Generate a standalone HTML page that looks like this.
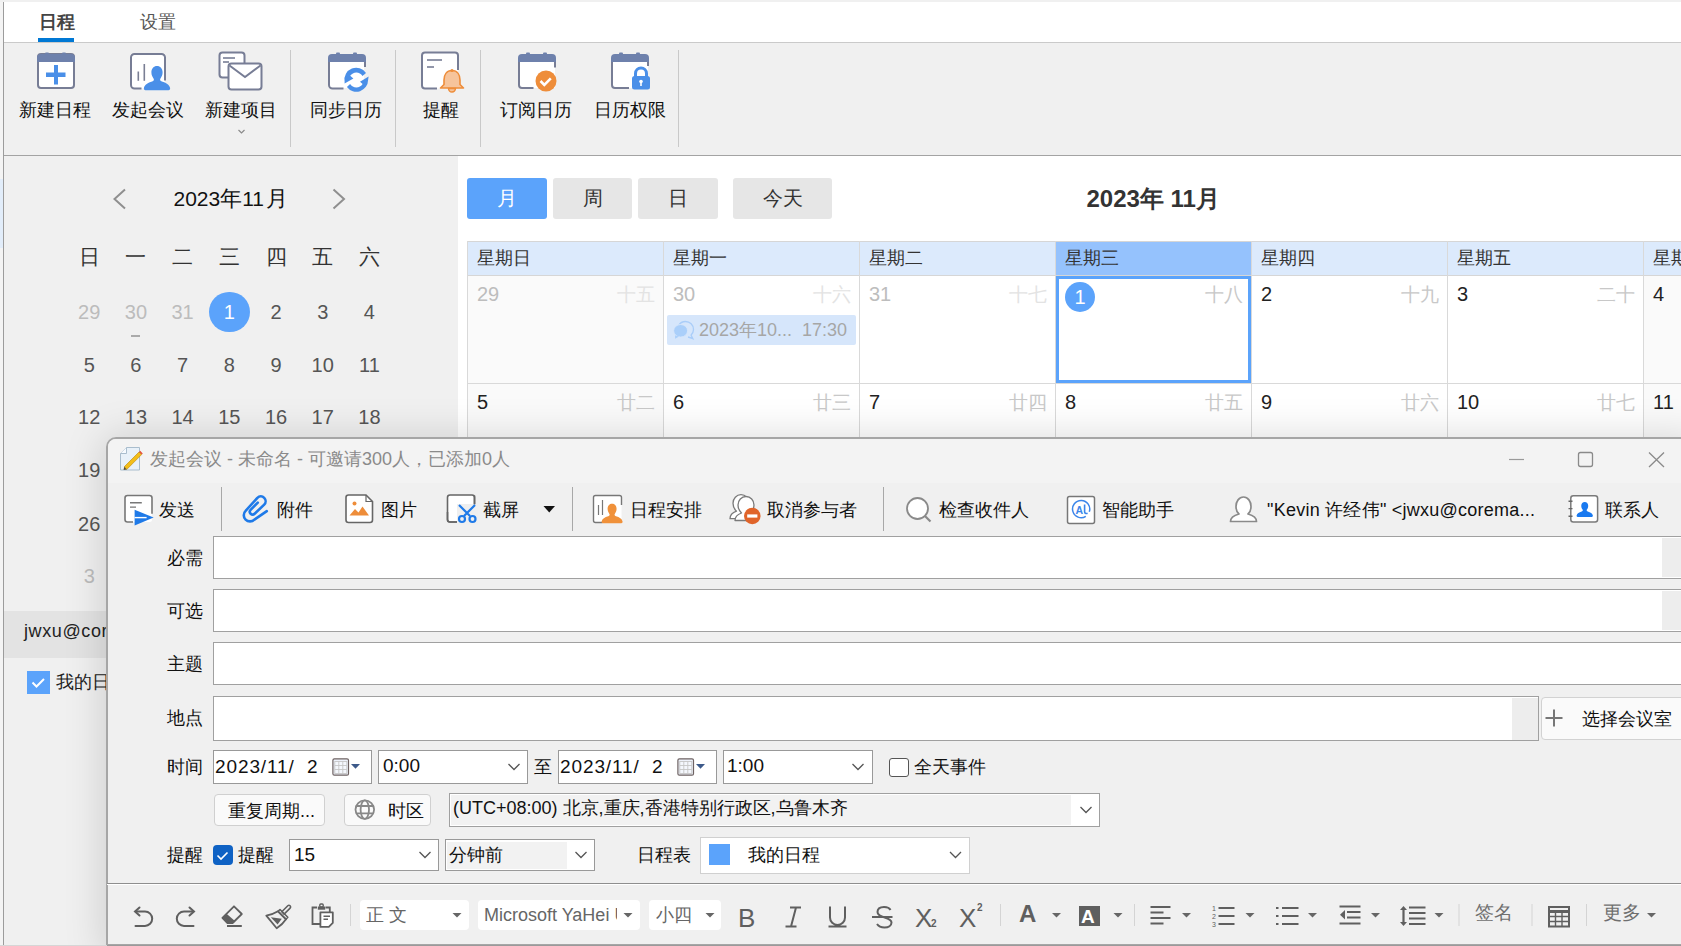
<!DOCTYPE html>
<html><head><meta charset="utf-8">
<style>
*{box-sizing:border-box}
html,body{margin:0;padding:0}
body{width:1681px;height:946px;position:relative;overflow:hidden;background:#f0f0f0;font-family:"Liberation Sans",sans-serif;color:#222}
.a{position:absolute}
.t{position:absolute;white-space:nowrap;line-height:1}
svg{position:absolute;overflow:visible}
</style></head><body>
<!-- window chrome -->
<div class="a" style="left:0;top:0;width:1681px;height:2px;background:#f0f0f0"></div>
<div class="a" style="left:0;top:2px;width:3px;height:944px;background:#f4f4f4"></div>
<div class="a" style="left:0;top:179px;width:3px;height:69px;background:#e2edfa"></div>
<div class="a" style="left:3px;top:2px;width:1px;height:944px;background:#9c9c9c"></div>
<!-- tab bar -->
<div class="a" style="left:4px;top:2px;width:1677px;height:40px;background:#fff"></div>
<div class="t" style="left:39px;top:13px;font-size:18px;font-weight:bold;color:#444">日程</div>
<div class="a" style="left:38px;top:38px;width:36px;height:4px;background:#0078d4"></div>
<div class="t" style="left:140px;top:13px;font-size:18px;color:#555">设置</div>
<div class="a" style="left:4px;top:42px;width:1677px;height:1px;background:#cacaca"></div>
<!-- ribbon -->
<div class="a" style="left:4px;top:43px;width:1677px;height:112px;background:#f0f0f0"></div>
<div class="a" style="left:4px;top:155px;width:1677px;height:1px;background:#a3a3a3"></div>
<svg style="left:0;top:0" width="700" height="156" viewBox="0 0 700 156">
<g stroke="#777d95" stroke-width="2" fill="#fff">
 <!-- 1 new calendar -->
 <rect x="38" y="54" width="36" height="34" rx="3"/>
 <!-- 3 project -->
 <rect x="219.5" y="52.5" width="25" height="25" rx="3"/>
 <rect x="228.5" y="63.5" width="33" height="26" rx="3"/>
</g>
<g fill="#6e81ac">
 <path d="M37 62V58a4 4 0 0 1 4-4h30a4 4 0 0 1 4 4v4z"/><rect x="45" y="52.5" width="4" height="3" rx="1"/><rect x="62" y="52.5" width="4" height="3" rx="1"/>
 <path d="M328 62V58a4 4 0 0 1 4-4h30a4 4 0 0 1 4 4v4z"/><rect x="336" y="52.5" width="4" height="3" rx="1"/><rect x="353" y="52.5" width="4" height="3" rx="1"/>
 <path d="M518 62V58a4 4 0 0 1 4-4h30a4 4 0 0 1 4 4v4z"/><rect x="526" y="52.5" width="4" height="3" rx="1"/><rect x="543" y="52.5" width="4" height="3" rx="1"/>
 <path d="M611 62V58a4 4 0 0 1 4-4h30a4 4 0 0 1 4 4v4z"/><rect x="619" y="52.5" width="4" height="3" rx="1"/><rect x="636" y="52.5" width="4" height="3" rx="1"/>
</g>
<!-- plus -->
<g fill="#4a8fe8"><rect x="46" y="72.5" width="19.5" height="4.5"/><rect x="54" y="65" width="4" height="19.5"/></g>
<!-- meeting bars + person -->
<rect x="131" y="54" width="34" height="34.5" rx="3" fill="#fff"/>
<g stroke="#7a7f94" stroke-width="1.6"><line x1="138.3" y1="71.5" x2="138.3" y2="80.8"/><line x1="144.3" y1="64" x2="144.3" y2="80.8"/></g>
<path d="M165 80.5V57.5a3.5 3.5 0 0 0 -3.5 -3.5h-27a3.5 3.5 0 0 0 -3.5 3.5v27.5a3.5 3.5 0 0 0 3.5 3.5h7" stroke="#777d95" stroke-width="2" fill="none"/>
<path d="M146.5 90.3h22c1.2 0 1.8-1 1.6-2.2-.8-3.5-4-5.2-8.2-6.5-1.6-.7-2-1.6-1.7-2.6 1.5-2.2 2.4-4 2.4-6.7 0-3.6-2.4-6.2-5.6-6.2s-5.6 2.6-5.6 6.2c0 2.7 .9 4.5 2.4 6.7 .3 1-.1 1.9-1.7 2.6-4.2 1.3-7.4 3-8.2 6.5-.2 1.2 .4 2.2 1.6 2.2z" fill="#4a8fe8" stroke="#efefef" stroke-width="0"/>
<!-- project doc lines + envelope V -->
<g stroke="#777d95" stroke-width="1.6" fill="none"><line x1="223" y1="58" x2="235" y2="58"/><line x1="223" y1="62" x2="229" y2="62"/><path d="M229.5 65.5L245 77 260.5 65.5" stroke-width="2"/></g>
<path d="M238.5 130l3 3 3-3" stroke="#8a8a8a" stroke-width="1.2" fill="none"/>
<!-- sync -->
<path d="M330 62h34v26h-34z" fill="#fff"/>
<path d="M329 62v23a3.5 3.5 0 0 0 3.5 3.5h11M365 62v5" stroke="#777d95" stroke-width="2" fill="none"/>
<g fill="#4a8fe8"><path d="M366 72.9A11.8 11.8 0 0 0 344.6 81.5L344.6 83.6 353.4 78.5 350.2 75.8A7.4 7.4 0 0 1 362.5 76Z"/><path d="M346.9 87.1A11.8 11.8 0 0 0 368.1 80L368.6 76.6 360 81.8 362.6 83.9A7.4 7.4 0 0 1 350.1 84Z"/></g>
<!-- reminder -->
<rect x="422" y="52.5" width="36" height="36" rx="3" fill="#fff"/>
<path d="M458 70V55.5a3 3 0 0 0-3-3h-30a3 3 0 0 0-3 3v30a3 3 0 0 0 3 3h12" stroke="#777d95" stroke-width="2" fill="none"/>
<g stroke="#777d95" stroke-width="1.6"><line x1="427" y1="60" x2="442" y2="60"/><line x1="427" y1="67" x2="434" y2="67"/></g>
<path d="M452 70.5c-5.5 0-8 4.5-8 9.5v4.5l-3.5 3.5h23l-3.5-3.5v-4.5c0-5-2.5-9.5-8-9.5z" fill="#f6c49b" stroke="#ee8d3a" stroke-width="1.6" stroke-linejoin="round"/>
<path d="M448.5 88.5a3.5 3.5 0 0 0 7 0z" fill="#f6c49b" stroke="#ee8d3a" stroke-width="1.4"/>
<circle cx="452" cy="70.5" r="1.5" fill="#ee8d3a"/>
<!-- subscribe check -->
<rect x="519" y="62" width="36" height="26" fill="#fff"/>
<path d="M519 62v23a3 3 0 0 0 3 3h11.5M555 62v5.5" stroke="#777d95" stroke-width="2" fill="none"/>
<circle cx="546" cy="81" r="10.5" fill="#ee8d3a"/>
<path d="M540.5 81l3.8 3.8 6.5-6.5" stroke="#fff" stroke-width="2.6" fill="none"/>
<!-- permission lock -->
<rect x="612" y="62" width="36" height="26" fill="#fff"/>
<path d="M612 62v23a3 3 0 0 0 3 3h14M648 62v4" stroke="#777d95" stroke-width="2" fill="none"/>
<path d="M635.5 77v-3.5a5.5 5.5 0 0 1 11 0v3.5" stroke="#4a8fe8" stroke-width="3" fill="none"/>
<rect x="632" y="76" width="18" height="13.5" rx="2.5" fill="#4a8fe8"/>
<circle cx="641" cy="81.5" r="1.8" fill="#fff"/><rect x="640.2" y="82" width="1.6" height="4" fill="#fff"/>
<!-- separators -->
<g fill="#c9c9c9"><rect x="290" y="50" width="1" height="97"/><rect x="395" y="50" width="1" height="97"/><rect x="480" y="50" width="1" height="97"/><rect x="678" y="50" width="1" height="97"/></g>
</svg>
<div class="t" style="left:19px;top:101px;font-size:18px;color:#111">新建日程</div>
<div class="t" style="left:112px;top:101px;font-size:18px;color:#111">发起会议</div>
<div class="t" style="left:205px;top:101px;font-size:18px;color:#111">新建项目</div>
<div class="t" style="left:310px;top:101px;font-size:18px;color:#111">同步日历</div>
<div class="t" style="left:423px;top:101px;font-size:18px;color:#111">提醒</div>
<div class="t" style="left:500px;top:101px;font-size:18px;color:#111">订阅日历</div>
<div class="t" style="left:594px;top:101px;font-size:18px;color:#111">日历权限</div>
<!-- sidebar -->
<div class="a" style="left:4px;top:156px;width:454px;height:790px;background:#f0f0f0"></div>
<div class="t" style="left:173.5px;top:188px;font-size:21px;color:#111">2023<span style="font-size:21.5px">年</span>11<span style="font-size:21.5px;margin-left:2px">月</span></div>
<svg style="left:0;top:0" width="460" height="700"><path d="M125 189.5L114.5 199 125 208.5" stroke="#8f8f8f" stroke-width="2" fill="none"/><path d="M333.5 189.5L344 199 333.5 208.5" stroke="#8f8f8f" stroke-width="2" fill="none"/></svg>
<div class="t" style="left:69.2px;width:40px;text-align:center;top:246px;font-size:21px;color:#333">日</div>
<div class="t" style="left:115.9px;width:40px;text-align:center;top:246px;font-size:21px;color:#333">一</div>
<div class="t" style="left:162.6px;width:40px;text-align:center;top:246px;font-size:21px;color:#333">二</div>
<div class="t" style="left:209.3px;width:40px;text-align:center;top:246px;font-size:21px;color:#333">三</div>
<div class="t" style="left:256.0px;width:40px;text-align:center;top:246px;font-size:21px;color:#333">四</div>
<div class="t" style="left:302.7px;width:40px;text-align:center;top:246px;font-size:21px;color:#333">五</div>
<div class="t" style="left:349.4px;width:40px;text-align:center;top:246px;font-size:21px;color:#333">六</div>
<div class="a" style="left:209.3px;top:291.8px;width:40.4px;height:40.4px;border-radius:50%;background:#5ba3fb"></div>
<div class="t" style="left:69.2px;width:40px;text-align:center;top:301.8px;font-size:20px;color:#bcbcbc">29</div>
<div class="t" style="left:115.9px;width:40px;text-align:center;top:301.8px;font-size:20px;color:#bcbcbc">30</div>
<div class="t" style="left:162.6px;width:40px;text-align:center;top:301.8px;font-size:20px;color:#bcbcbc">31</div>
<div class="t" style="left:209.3px;width:40px;text-align:center;top:301.8px;font-size:20px;color:#fff">1</div>
<div class="t" style="left:256.0px;width:40px;text-align:center;top:301.8px;font-size:20px;color:#555">2</div>
<div class="t" style="left:302.7px;width:40px;text-align:center;top:301.8px;font-size:20px;color:#555">3</div>
<div class="t" style="left:349.4px;width:40px;text-align:center;top:301.8px;font-size:20px;color:#555">4</div>
<div class="t" style="left:69.2px;width:40px;text-align:center;top:355.3px;font-size:20px;color:#555">5</div>
<div class="t" style="left:115.9px;width:40px;text-align:center;top:355.3px;font-size:20px;color:#555">6</div>
<div class="t" style="left:162.6px;width:40px;text-align:center;top:355.3px;font-size:20px;color:#555">7</div>
<div class="t" style="left:209.3px;width:40px;text-align:center;top:355.3px;font-size:20px;color:#555">8</div>
<div class="t" style="left:256.0px;width:40px;text-align:center;top:355.3px;font-size:20px;color:#555">9</div>
<div class="t" style="left:302.7px;width:40px;text-align:center;top:355.3px;font-size:20px;color:#555">10</div>
<div class="t" style="left:349.4px;width:40px;text-align:center;top:355.3px;font-size:20px;color:#555">11</div>
<div class="t" style="left:69.2px;width:40px;text-align:center;top:407.3px;font-size:20px;color:#555">12</div>
<div class="t" style="left:115.9px;width:40px;text-align:center;top:407.3px;font-size:20px;color:#555">13</div>
<div class="t" style="left:162.6px;width:40px;text-align:center;top:407.3px;font-size:20px;color:#555">14</div>
<div class="t" style="left:209.3px;width:40px;text-align:center;top:407.3px;font-size:20px;color:#555">15</div>
<div class="t" style="left:256.0px;width:40px;text-align:center;top:407.3px;font-size:20px;color:#555">16</div>
<div class="t" style="left:302.7px;width:40px;text-align:center;top:407.3px;font-size:20px;color:#555">17</div>
<div class="t" style="left:349.4px;width:40px;text-align:center;top:407.3px;font-size:20px;color:#555">18</div>
<div class="t" style="left:69.2px;width:40px;text-align:center;top:460.3px;font-size:20px;color:#555">19</div>
<div class="t" style="left:115.9px;width:40px;text-align:center;top:460.3px;font-size:20px;color:#555">20</div>
<div class="t" style="left:162.6px;width:40px;text-align:center;top:460.3px;font-size:20px;color:#555">21</div>
<div class="t" style="left:209.3px;width:40px;text-align:center;top:460.3px;font-size:20px;color:#555">22</div>
<div class="t" style="left:256.0px;width:40px;text-align:center;top:460.3px;font-size:20px;color:#555">23</div>
<div class="t" style="left:302.7px;width:40px;text-align:center;top:460.3px;font-size:20px;color:#555">24</div>
<div class="t" style="left:349.4px;width:40px;text-align:center;top:460.3px;font-size:20px;color:#555">25</div>
<div class="t" style="left:69.2px;width:40px;text-align:center;top:513.8px;font-size:20px;color:#555">26</div>
<div class="t" style="left:115.9px;width:40px;text-align:center;top:513.8px;font-size:20px;color:#555">27</div>
<div class="t" style="left:162.6px;width:40px;text-align:center;top:513.8px;font-size:20px;color:#555">28</div>
<div class="t" style="left:209.3px;width:40px;text-align:center;top:513.8px;font-size:20px;color:#555">29</div>
<div class="t" style="left:256.0px;width:40px;text-align:center;top:513.8px;font-size:20px;color:#555">30</div>
<div class="t" style="left:302.7px;width:40px;text-align:center;top:513.8px;font-size:20px;color:#bcbcbc">1</div>
<div class="t" style="left:349.4px;width:40px;text-align:center;top:513.8px;font-size:20px;color:#bcbcbc">2</div>
<div class="t" style="left:69.2px;width:40px;text-align:center;top:565.8px;font-size:20px;color:#bcbcbc">3</div>
<div class="t" style="left:115.9px;width:40px;text-align:center;top:565.8px;font-size:20px;color:#bcbcbc">4</div>
<div class="t" style="left:162.6px;width:40px;text-align:center;top:565.8px;font-size:20px;color:#bcbcbc">5</div>
<div class="t" style="left:209.3px;width:40px;text-align:center;top:565.8px;font-size:20px;color:#bcbcbc">6</div>
<div class="t" style="left:256.0px;width:40px;text-align:center;top:565.8px;font-size:20px;color:#bcbcbc">7</div>
<div class="t" style="left:302.7px;width:40px;text-align:center;top:565.8px;font-size:20px;color:#bcbcbc">8</div>
<div class="t" style="left:349.4px;width:40px;text-align:center;top:565.8px;font-size:20px;color:#bcbcbc">9</div>
<div class="a" style="left:131px;top:335px;width:9px;height:1.5px;background:#aaa"></div>
<div class="a" style="left:4px;top:611px;width:454px;height:47px;background:#e3e3e3"></div>
<div class="t" style="left:24px;top:622px;font-size:18px;color:#222;letter-spacing:0.6px">jwxu@coremail.cn</div>
<div class="a" style="left:27px;top:670.5px;width:23px;height:23px;background:#5ba3fb"></div>
<svg style="left:0;top:0" width="60" height="700"><path d="M32.5 682.5l4 4 7.5-7.5" stroke="#fff" stroke-width="2" fill="none"/></svg>
<div class="t" style="left:56px;top:673px;font-size:18px;color:#222">我的日程</div>
<!-- main calendar -->
<div class="a" style="left:458px;top:156px;width:1223px;height:790px;background:#fff"></div>
<div class="a" style="left:467px;top:178px;width:80px;height:41px;border-radius:3px;background:#5ba3fb;color:#fff;font-size:20px;line-height:41px;text-align:center">月</div>
<div class="a" style="left:553px;top:178px;width:79px;height:41px;border-radius:3px;background:#e6e6e6;color:#333;font-size:20px;line-height:41px;text-align:center">周</div>
<div class="a" style="left:638px;top:178px;width:80px;height:41px;border-radius:3px;background:#e6e6e6;color:#333;font-size:20px;line-height:41px;text-align:center">日</div>
<div class="a" style="left:733px;top:178px;width:99px;height:41px;border-radius:3px;background:#e6e6e6;color:#333;font-size:20px;line-height:41px;text-align:center">今天</div>
<div class="t" style="left:1086.5px;top:187px;font-size:24px;font-weight:bold;color:#333">2023<span style="font-size:24px">年</span> 11<span style="font-size:24px">月</span></div>
<div class="a" style="left:467px;top:241px;width:1214px;height:35px;background:#dceafc;border-top:1px solid #d6d6d6;border-bottom:1px solid #d6d6d6"></div>
<div class="a" style="left:1056px;top:242px;width:195px;height:33px;background:#95c2fd"></div>
<div class="t" style="left:477px;top:249px;font-size:18px;color:#333">星期日</div>
<div class="t" style="left:673px;top:249px;font-size:18px;color:#333">星期一</div>
<div class="t" style="left:869px;top:249px;font-size:18px;color:#333">星期二</div>
<div class="t" style="left:1065px;top:249px;font-size:18px;color:#333">星期三</div>
<div class="t" style="left:1261px;top:249px;font-size:18px;color:#333">星期四</div>
<div class="t" style="left:1457px;top:249px;font-size:18px;color:#333">星期五</div>
<div class="t" style="left:1653px;top:249px;font-size:18px;color:#333">星期六</div>
<div class="a" style="left:467px;top:276px;width:196px;height:107px;background:#fafafa"></div>
<div class="a" style="left:1643px;top:276px;width:38px;height:107px;background:#fafafa"></div>
<div class="a" style="left:467px;top:384px;width:196px;height:60px;background:#fafafa"></div>
<div class="a" style="left:1643px;top:384px;width:38px;height:60px;background:#fafafa"></div>
<div class="a" style="left:467px;top:241px;width:1px;height:205px;background:#d9d9d9"></div>
<div class="a" style="left:663px;top:241px;width:1px;height:205px;background:#d9d9d9"></div>
<div class="a" style="left:859px;top:241px;width:1px;height:205px;background:#d9d9d9"></div>
<div class="a" style="left:1055px;top:241px;width:1px;height:205px;background:#d9d9d9"></div>
<div class="a" style="left:1251px;top:241px;width:1px;height:205px;background:#d9d9d9"></div>
<div class="a" style="left:1447px;top:241px;width:1px;height:205px;background:#d9d9d9"></div>
<div class="a" style="left:1643px;top:241px;width:1px;height:205px;background:#d9d9d9"></div>
<div class="a" style="left:467px;top:383px;width:1214px;height:1px;background:#d9d9d9"></div>
<div class="t" style="left:477px;top:284px;font-size:20px;color:#bdbdbd">29</div>
<div class="t" style="left:565px;width:90px;text-align:right;top:285px;font-size:19px;color:#e3e3e3">十五</div>
<div class="t" style="left:673px;top:284px;font-size:20px;color:#bdbdbd">30</div>
<div class="t" style="left:761px;width:90px;text-align:right;top:285px;font-size:19px;color:#e3e3e3">十六</div>
<div class="t" style="left:869px;top:284px;font-size:20px;color:#bdbdbd">31</div>
<div class="t" style="left:957px;width:90px;text-align:right;top:285px;font-size:19px;color:#e3e3e3">十七</div>
<div class="t" style="left:1153px;width:90px;text-align:right;top:285px;font-size:19px;color:#c8c8c8">十八</div>
<div class="t" style="left:1261px;top:284px;font-size:20px;color:#222">2</div>
<div class="t" style="left:1349px;width:90px;text-align:right;top:285px;font-size:19px;color:#c8c8c8">十九</div>
<div class="t" style="left:1457px;top:284px;font-size:20px;color:#222">3</div>
<div class="t" style="left:1545px;width:90px;text-align:right;top:285px;font-size:19px;color:#c8c8c8">二十</div>
<div class="t" style="left:1653px;top:284px;font-size:20px;color:#222">4</div>
<div class="t" style="left:1741px;width:90px;text-align:right;top:285px;font-size:19px;color:#c8c8c8">廿一</div>
<div class="t" style="left:477px;top:392px;font-size:20px;color:#222">5</div>
<div class="t" style="left:565px;width:90px;text-align:right;top:393px;font-size:19px;color:#c8c8c8">廿二</div>
<div class="t" style="left:673px;top:392px;font-size:20px;color:#222">6</div>
<div class="t" style="left:761px;width:90px;text-align:right;top:393px;font-size:19px;color:#c8c8c8">廿三</div>
<div class="t" style="left:869px;top:392px;font-size:20px;color:#222">7</div>
<div class="t" style="left:957px;width:90px;text-align:right;top:393px;font-size:19px;color:#c8c8c8">廿四</div>
<div class="t" style="left:1065px;top:392px;font-size:20px;color:#222">8</div>
<div class="t" style="left:1153px;width:90px;text-align:right;top:393px;font-size:19px;color:#c8c8c8">廿五</div>
<div class="t" style="left:1261px;top:392px;font-size:20px;color:#222">9</div>
<div class="t" style="left:1349px;width:90px;text-align:right;top:393px;font-size:19px;color:#c8c8c8">廿六</div>
<div class="t" style="left:1457px;top:392px;font-size:20px;color:#222">10</div>
<div class="t" style="left:1545px;width:90px;text-align:right;top:393px;font-size:19px;color:#c8c8c8">廿七</div>
<div class="t" style="left:1653px;top:392px;font-size:20px;color:#222">11</div>
<div class="t" style="left:1741px;width:90px;text-align:right;top:393px;font-size:19px;color:#c8c8c8">廿八</div>
<div class="a" style="left:1056px;top:276px;width:195px;height:107px;border:3px solid #5ba3fb"></div>
<div class="a" style="left:1065px;top:282px;width:30px;height:30px;border-radius:50%;background:#5ba3fb;color:#fff;font-size:20px;line-height:30px;text-align:center">1</div>
<div class="a" style="left:667px;top:315px;width:189px;height:30px;background:#d6e6fb;border-radius:2px"></div>
<svg style="left:0;top:0" width="700" height="360"><path d="M690.8 335.5c1.6-1.5 2.7-3.6 2.7-6 0-4.5-3.6-8-8-8-3 0-5.6 1.6-7 4M688 337c1.5.3 3.2.8 4.8 1.6l-1.8-3.6" fill="none" stroke="#a9cdf9" stroke-width="1.3"/><ellipse cx="680.6" cy="330.8" rx="7" ry="6.3" fill="#aacffa" stroke="#d6e6fb" stroke-width="1"/><path d="M675 335.5l.2 3.3 3.8-2.3z" fill="#aacffa"/></svg>
<div class="t" style="left:699px;top:321px;font-size:18px;color:#a6a6a6">2023年10...&nbsp; 17:30</div>
<!-- dialog -->
<div class="a" style="left:107px;top:437px;width:1600px;height:520px;border-radius:10px 0 0 0;box-shadow:-3px 0 40px rgba(0,0,0,0.15)"></div>
<div class="a" style="left:106px;top:437px;width:1600px;height:509px;border:2px solid #a6a6a6;border-radius:10px 0 0 0;background:#f0f0f0;overflow:hidden"><div class="a" style="left:0;top:0;width:1600px;height:44px;background:#f3f3f3"></div></div>
<svg style="left:0;top:0" width="1681" height="946"><path d="M120.5 453.5l6-6h13v22.5h-19z" fill="#e8f1f9" stroke="#a9bdcd" stroke-width="1"/><path d="M120.5 453.5h6v-6" fill="#f7fbff" stroke="#a9bdcd" stroke-width="1"/><path d="M124.2 466.8l14.8-14.8 2.6 2.6-14.8 14.8z" fill="#f2be1a" stroke="#b8860b" stroke-width="0.6"/><path d="M139 452l1.2-1.2 2.6 2.6-1.2 1.2z" fill="#e5533d"/><path d="M124.2 466.8l-0.6 3.2 3.2-0.6z" fill="#5a5030"/><path d="M1509 459.5h15" stroke="#9a9a9a" stroke-width="1.2"/><rect x="1578.5" y="452.5" width="14" height="14" rx="2" fill="none" stroke="#8a8a8a" stroke-width="1.3"/><path d="M1649 452.5l15 14.5M1664 452.5l-15 14.5" stroke="#8a8a8a" stroke-width="1.3"/></svg>
<div class="t" style="left:150px;top:450px;font-size:18px;color:#8a8a8a">发起会议 - 未命名 - 可邀请300人，已添加0人</div>
<div class="t" style="left:159px;top:501px;font-size:18px;color:#111;">发送</div>
<div class="t" style="left:277px;top:501px;font-size:18px;color:#111;">附件</div>
<div class="t" style="left:381px;top:501px;font-size:18px;color:#111;">图片</div>
<div class="t" style="left:483px;top:501px;font-size:18px;color:#111;">截屏</div>
<div class="t" style="left:630px;top:501px;font-size:18px;color:#111;">日程安排</div>
<div class="t" style="left:767px;top:501px;font-size:18px;color:#111;">取消参与者</div>
<div class="t" style="left:939px;top:501px;font-size:18px;color:#111;">检查收件人</div>
<div class="t" style="left:1102px;top:501px;font-size:18px;color:#111;">智能助手</div>
<div class="t" style="left:1605px;top:501px;font-size:18px;color:#111;">联系人</div>
<div class="t" style="left:1267px;top:501px;font-size:18px;color:#111;letter-spacing:0.25px">"Kevin 许经伟" &lt;jwxu@corema...</div>
<svg style="left:0;top:0" width="1681" height="946"><rect x="221" y="487" width="1" height="44" fill="#a8a8a8"/><rect x="572" y="487" width="1" height="44" fill="#a8a8a8"/><rect x="883" y="487" width="1" height="44" fill="#a8a8a8"/><rect x="125" y="495.5" width="27" height="26.5" rx="2.5" fill="#fff"/><path d="M152 513.8V498a2.5 2.5 0 0 0-2.5-2.5h-22a2.5 2.5 0 0 0-2.5 2.5v21.5a2.5 2.5 0 0 0 2.5 2.5h5.5" fill="none" stroke="#777" stroke-width="1.6"/><path d="M130 502.7h11.8M130 507.1h6" stroke="#777" stroke-width="1.4"/><path d="M134.6 509.8L153.6 517.6 134.6 525.6z" fill="#1f7ae8"/><path d="M134.6 517.6h12" stroke="#fff" stroke-width="1.4"/><path d="M257.8 502.6L250.6 509.8A2.83 2.83 0 0 0 254.6 513.8L264.2 504.6A4.8 4.8 0 0 0 257.4 497.8L245.6 510.8A6.22 6.22 0 0 0 254.4 519.6L266.8 511.2" fill="none" stroke="#1f7ae8" stroke-width="2.6" stroke-linecap="round" stroke-linejoin="round"/><path d="M346 497.5a2.5 2.5 0 0 1 2.5-2.5h17.5l6.5 6.5v18.5a2.5 2.5 0 0 1-2.5 2.5h-21.5a2.5 2.5 0 0 1-2.5-2.5z" fill="#fff" stroke="#666" stroke-width="1.6"/><path d="M366 495v6.5h6.5" fill="none" stroke="#666" stroke-width="1.2"/><circle cx="354.5" cy="503.5" r="2" fill="#ee8d3a"/><path d="M349.5 515.5l5.5-6.5 3.5 3.5 4-6 6.5 9z" fill="#ee8d3a"/><rect x="447.5" y="495" width="27" height="27" rx="2.5" fill="#fff" stroke="#666" stroke-width="1.6"/><rect x="457" y="504" width="21" height="21" fill="#efefef"/><path d="M447.5 512v7.5a2.5 2.5 0 0 0 2.5 2.5h7" stroke="#666" stroke-width="1.6" fill="none"/><path d="M474.5 495.5v9" stroke="#666" stroke-width="1.6"/><g stroke="#1f7ae8" stroke-width="2.2" fill="none"><path d="M459 505l11 11M475 505l-11 11"/><circle cx="462" cy="519" r="3"/><circle cx="472.5" cy="519" r="3"/></g><path d="M543.5 506h11.5l-5.75 6.5z" fill="#111"/><rect x="593.5" y="495.5" width="28" height="27" rx="2" fill="#fff"/><path d="M621.5 505V497.5a2 2 0 0 0-2-2h-24a2 2 0 0 0-2 2v23a2 2 0 0 0 2 2h7" stroke="#777" stroke-width="1.4" fill="none"/><path d="M598.5 505v10M602.5 500v15" stroke="#777" stroke-width="1.2"/><path transform="translate(602.5 504) scale(0.8) translate(-145 -66.3)" d="M146.5 90.3h22c1.2 0 1.8-1 1.6-2.2-.8-3.5-4-5.2-8.2-6.5-1.6-.7-2-1.6-1.7-2.6 1.5-2.2 2.4-4 2.4-6.7 0-3.6-2.4-6.2-5.6-6.2s-5.6 2.6-5.6 6.2c0 2.7 .9 4.5 2.4 6.7 .3 1-.1 1.9-1.7 2.6-4.2 1.3-7.4 3-8.2 6.5-.2 1.2 .4 2.2 1.6 2.2z" fill="#f0913a"/><g fill="#fff" stroke="#7a7a7a" stroke-width="1.3" stroke-linejoin="round"><path transform="translate(-5 -1.8)" d="M735 520.5c0-4 2.5-6 6.5-7.5-2-2-3.5-4.5-3.5-8 0-4.5 3.5-8.5 8-8.5s8 4 8 8.5c0 3.5-1.5 6-3.5 8 4 1.5 6.5 3.5 6.5 7.5z"/><path d="M735 520.5c0-4 2.5-6 6.5-7.5-2-2-3.5-4.5-3.5-8 0-4.5 3.5-8.5 8-8.5s8 4 8 8.5c0 3.5-1.5 6-3.5 8 4 1.5 6.5 3.5 6.5 7.5z"/></g><circle cx="752.3" cy="516" r="8.3" fill="#e0642a"/><rect x="747.2" y="514.4" width="10.2" height="3.2" fill="#fff"/><circle cx="917.5" cy="508.5" r="10.5" fill="#fff" stroke="#8a8a8a" stroke-width="1.8"/><path d="M925 516l5.5 5.5" stroke="#8a8a8a" stroke-width="2.2"/><rect x="1067.5" y="496.5" width="27" height="27" rx="2" fill="#fff" stroke="#777" stroke-width="1.5"/><path d="M1085.8 516.3A8.6 8.6 0 1 1 1089.3 511.8" fill="none" stroke="#3b86ea" stroke-width="1.5"/><text x="1079.2" y="513.6" font-size="10.5" font-weight="bold" font-family="Liberation Sans" fill="#3b86ea" text-anchor="middle">A</text><path d="M1084.6 504.5v7.2c0 1.5 1.2 2.2 3 1.6" fill="none" stroke="#3b86ea" stroke-width="1.6"/><path d="M1230.5 521.5c0-3.5 3-6 8.5-7.5-2-1.5-3-4-3-7.5 0-5 3-9.5 7.5-9.5s7.5 4.5 7.5 9.5c0 3.5-1 6-3 7.5 5.5 1.5 8.5 4 8.5 7.5z" fill="#fff" stroke="#8a8a8a" stroke-width="1.7" stroke-linejoin="round"/><rect x="1570.8" y="495.8" width="26.8" height="26.2" rx="2.5" fill="#fff" stroke="#7a7a7a" stroke-width="1.5"/><path d="M1568.5 501.3h4M1568.5 508.6h4M1568.5 516.3h4" stroke="#666" stroke-width="1.4"/><path transform="translate(1577.3 502) scale(.62) translate(-145 -66.3)" d="M146.5 90.3h22c1.2 0 1.8-1 1.6-2.2-.8-3.5-4-5.2-8.2-6.5-1.6-.7-2-1.6-1.7-2.6 1.5-2.2 2.4-4 2.4-6.7 0-3.6-2.4-6.2-5.6-6.2s-5.6 2.6-5.6 6.2c0 2.7 .9 4.5 2.4 6.7 .3 1-.1 1.9-1.7 2.6-4.2 1.3-7.4 3-8.2 6.5-.2 1.2 .4 2.2 1.6 2.2z" fill="#1a7af0"/></svg>
<div class="t" style="left:167px;top:549px;font-size:18px;color:#111;">必需</div>
<div class="t" style="left:167px;top:602px;font-size:18px;color:#111;">可选</div>
<div class="t" style="left:167px;top:655px;font-size:18px;color:#111;">主题</div>
<div class="t" style="left:167px;top:709px;font-size:18px;color:#111;">地点</div>
<div class="a" style="left:213px;top:536px;width:1480px;height:43px;background:#fff;border:1px solid #a0a0a0;border-radius:0px;"></div>
<div class="a" style="left:1662px;top:538px;width:19px;height:39px;background:#ededed"></div>
<div class="a" style="left:213px;top:589px;width:1480px;height:43px;background:#fff;border:1px solid #a0a0a0;border-radius:0px;"></div>
<div class="a" style="left:1662px;top:591px;width:19px;height:39px;background:#ededed"></div>
<div class="a" style="left:213px;top:642px;width:1480px;height:43px;background:#fff;border:1px solid #a0a0a0;border-radius:0px;"></div>
<div class="a" style="left:213px;top:696px;width:1326px;height:45px;background:#fff;border:1px solid #a0a0a0;border-radius:0px;"></div>
<div class="a" style="left:1512px;top:698px;width:26px;height:42px;background:#ededed"></div>
<div class="a" style="left:1541px;top:697px;width:160px;height:43px;background:#fafafa;border:1px solid #d2d2d2;border-radius:4px;"></div>
<svg style="left:0;top:0" width="1681" height="946"><path d="M1554 709.5v17M1545.5 718h17" stroke="#777" stroke-width="2"/></svg>
<div class="t" style="left:1582px;top:710px;font-size:18px;color:#111;">选择会议室</div>
<div class="t" style="left:167px;top:758px;font-size:18px;color:#111;">时间</div>
<div class="a" style="left:213px;top:750px;width:159px;height:34px;background:#fff;border:1px solid #999;border-radius:0px;"></div>
<div class="t" style="left:215px;top:757px;font-size:19px;color:#111;letter-spacing:0.9px">2023/11/&nbsp; 2</div>
<div class="a" style="left:378px;top:750px;width:150px;height:34px;background:#fff;border:1px solid #999;border-radius:0px;"></div>
<div class="t" style="left:383px;top:756px;font-size:19px;color:#111;">0:00</div>
<div class="t" style="left:534px;top:758px;font-size:18px;color:#111;">至</div>
<div class="a" style="left:558px;top:750px;width:159px;height:34px;background:#fff;border:1px solid #999;border-radius:0px;"></div>
<div class="t" style="left:560px;top:757px;font-size:19px;color:#111;letter-spacing:0.9px">2023/11/&nbsp; 2</div>
<div class="a" style="left:723px;top:750px;width:150px;height:34px;background:#fff;border:1px solid #999;border-radius:0px;"></div>
<div class="t" style="left:727px;top:756px;font-size:19px;color:#111;">1:00</div>
<div class="a" style="left:889px;top:757.5px;width:20px;height:19.5px;background:#fff;border:1px solid #555;border-radius:3px;"></div>
<div class="t" style="left:914px;top:758px;font-size:18px;color:#111;">全天事件</div>
<div class="a" style="left:214px;top:794px;width:111px;height:32px;background:#fafafa;border:1px solid #d0d0d0;border-radius:4px;"></div>
<div class="t" style="left:228px;top:802px;font-size:18px;color:#111;">重复周期...</div>
<div class="a" style="left:344px;top:794px;width:87px;height:32px;background:#fafafa;border:1px solid #d0d0d0;border-radius:4px;"></div>
<div class="t" style="left:388px;top:802px;font-size:18px;color:#111;">时区</div>
<div class="a" style="left:449px;top:793px;width:651px;height:34px;background:#fff;border:1px solid #a0a0a0;border-radius:0px;"></div>
<div class="a" style="left:451px;top:795px;width:620px;height:30px;background:#f2f2f2"></div>
<div class="t" style="left:453px;top:799px;font-size:18px;color:#111;">(UTC+08:00) 北京,重庆,香港特别行政区,乌鲁木齐</div>
<div class="t" style="left:167px;top:846px;font-size:18px;color:#111;">提醒</div>
<div class="a" style="left:213px;top:845px;width:20px;height:20px;border-radius:4px;background:#0f62c4"></div>
<div class="t" style="left:238px;top:846px;font-size:18px;color:#111;">提醒</div>
<div class="a" style="left:289px;top:839px;width:150px;height:32px;background:#fff;border:1px solid #999;border-radius:0px;"></div>
<div class="t" style="left:294px;top:845px;font-size:19px;color:#111;">15</div>
<div class="a" style="left:445px;top:839px;width:150px;height:32px;background:#fff;border:1px solid #999;border-radius:0px;"></div>
<div class="a" style="left:447px;top:841.5px;width:120px;height:27px;background:#f2f2f2"></div>
<div class="t" style="left:449px;top:846px;font-size:18px;color:#111;">分钟前</div>
<div class="t" style="left:637px;top:846px;font-size:18px;color:#111;">日程表</div>
<div class="a" style="left:700px;top:836.5px;width:270px;height:37px;background:#fff;border:1px solid #d0d0d0;border-radius:0px;"></div>
<div class="a" style="left:709px;top:844px;width:21px;height:21px;background:#5ba3fb"></div>
<div class="t" style="left:748px;top:846px;font-size:18px;color:#111;">我的日程</div>
<svg style="left:0;top:0" width="1681" height="946"><rect x="332.90000000000003" y="758.8" width="15.6" height="16.4" rx="1.5" fill="#eef2fb" stroke="#6e6262" stroke-width="1.2"/><rect x="334.8" y="761.5" width="12" height="12" fill="#f4f7fd" stroke="#c6c6c6" stroke-width=".9"/><path d="M338.8 761.5v12M342.8 761.5v12M334.8 765.5h12M334.8 769.5h12" stroke="#c6c6c6" stroke-width=".9"/><path d="M351.0 764h9l-4.5 4.8z" fill="#3d5a8a"/><rect x="677.9" y="758.8" width="15.6" height="16.4" rx="1.5" fill="#eef2fb" stroke="#6e6262" stroke-width="1.2"/><rect x="679.8" y="761.5" width="12" height="12" fill="#f4f7fd" stroke="#c6c6c6" stroke-width=".9"/><path d="M683.8 761.5v12M687.8 761.5v12M679.8 765.5h12M679.8 769.5h12" stroke="#c6c6c6" stroke-width=".9"/><path d="M696.0 764h9l-4.5 4.8z" fill="#3d5a8a"/><path d="M508.5 764l5.5 5.5 5.5-5.5" stroke="#555" stroke-width="1.3" fill="none"/><path d="M852.5 764l5.5 5.5 5.5-5.5" stroke="#555" stroke-width="1.3" fill="none"/><path d="M1080.5 807l5.5 5.5 5.5-5.5" stroke="#555" stroke-width="1.3" fill="none"/><path d="M419.5 852l5.5 5.5 5.5-5.5" stroke="#555" stroke-width="1.3" fill="none"/><path d="M575.5 852l5.5 5.5 5.5-5.5" stroke="#555" stroke-width="1.3" fill="none"/><path d="M950.0 852l5.5 5.5 5.5-5.5" stroke="#555" stroke-width="1.3" fill="none"/><path d="M217.5 855.5l3.5 3.5 6.5-6.5" stroke="#fff" stroke-width="1.6" fill="none"/><g fill="none" stroke="#888" stroke-width="1.8"><circle cx="364.8" cy="809.6" r="9.3"/><ellipse cx="364.8" cy="809.6" rx="4.2" ry="9.3"/><path d="M355.8 806h18M355.8 813.4h18"/></g></svg>
<div class="a" style="left:107px;top:883px;width:1574px;height:1px;background:#8e8e8e"></div>
<div class="a" style="left:107px;top:884px;width:1574px;height:1px;background:#fff"></div>
<div class="a" style="left:107px;top:944.5px;width:1574px;height:1.5px;background:#9a9a9a"></div>
<div class="a" style="left:0;top:944.5px;width:107px;height:1.5px;background:#d6d6d6"></div>
<div class="a" style="left:360px;top:900px;width:109px;height:30px;background:#fff;border-radius:4px;overflow:hidden"><div class="t" style="left:6px;top:6px;font-size:18px;color:#666;width:75px;overflow:hidden">正 文</div></div>
<div class="a" style="left:478px;top:900px;width:162px;height:30px;background:#fff;border-radius:4px;overflow:hidden"><div class="t" style="left:6px;top:6px;font-size:18px;color:#666;width:133px;overflow:hidden">Microsoft YaHei U</div></div>
<div class="a" style="left:649px;top:900px;width:72px;height:30px;background:#fff;border-radius:4px;overflow:hidden"><div class="t" style="left:7px;top:6px;font-size:18px;color:#666;width:37px;overflow:hidden">小四</div></div>
<svg style="left:0;top:0" width="1681" height="946"><path d="M452.5 913h9l-4.5 4.5z" fill="#666"/><path d="M623.5 913h9l-4.5 4.5z" fill="#666"/><path d="M705.5 913h9l-4.5 4.5z" fill="#666"/><path d="M1052.0 913h9l-4.5 4.5z" fill="#666"/><path d="M1113.5 913h9l-4.5 4.5z" fill="#666"/><path d="M1182.0 913h9l-4.5 4.5z" fill="#666"/><path d="M1245.5 913h9l-4.5 4.5z" fill="#666"/><path d="M1308.0 913h9l-4.5 4.5z" fill="#666"/><path d="M1371.0 913h9l-4.5 4.5z" fill="#666"/><path d="M1434.5 913h9l-4.5 4.5z" fill="#666"/><path d="M1647.0 913h9l-4.5 4.5z" fill="#666"/><g fill="none" stroke="#5f5f5f" stroke-width="2" stroke-linecap="round"><path d="M136.5 911.5h8.5a7.2 7.2 0 0 1 0 14.4h-9.5"/><path d="M139.5 907.5l-4.5 4 4.5 4"/><path d="M192.5 911.5h-8.5a7.2 7.2 0 0 0 0 14.4h9.5"/><path d="M189.5 907.5l4.5 4-4.5 4"/></g><path d="M222.4 917.8L234 906.3 241.8 914 232.6 923H227.2z" fill="none" stroke="#5f5f5f" stroke-width="1.8" stroke-linejoin="round"/><path d="M222.4 917.8L226.6 913.7 235.2 921.3 233.5 923H227.2z" fill="#5f5f5f"/><path d="M227 926h14.8" stroke="#5f5f5f" stroke-width="2"/><path d="M287.8 905.8a1.6 1.6 0 0 1 2.3 2.3l-6 6-2.3-2.3z" fill="none" stroke="#5f5f5f" stroke-width="1.6" stroke-linejoin="round"/><path d="M278 911.3l2-1.8 7.8 7.8-1.8 2z" fill="none" stroke="#5f5f5f" stroke-width="1.6" stroke-linejoin="round"/><path d="M266.3 915.6c4-.6 8-2 11.7-4.3l8 8c-2.3 3.5-5.5 6.5-9.3 9z" fill="none" stroke="#5f5f5f" stroke-width="1.8" stroke-linejoin="round"/><path d="M270.8 917.2l11 1.5-4.2 5.9z" fill="#5f5f5f"/><path d="M317 907.5h-4.5v16.5h7.5M325.5 907.5h4.3v4.5" fill="none" stroke="#5f5f5f" stroke-width="1.8"/><rect x="317.8" y="906.5" width="7.4" height="3.2" fill="#5f5f5f"/><rect x="319.8" y="904" width="3.4" height="3" rx="1" fill="none" stroke="#5f5f5f" stroke-width="1.4"/><path d="M320.4 912.4h12.4v10.5l-4 4h-8.4z" fill="#fff" stroke="#5f5f5f" stroke-width="1.8" stroke-linejoin="round"/><path d="M323.5 916.2h6.5M323.5 919.3h4.5" stroke="#5f5f5f" stroke-width="1.6"/><rect x="350" y="904" width="1" height="22" fill="#d4d4d4"/><rect x="1000" y="904" width="1" height="22" fill="#d4d4d4"/><rect x="1134" y="904" width="1" height="22" fill="#d4d4d4"/><rect x="1458.5" y="904" width="1" height="22" fill="#d4d4d4"/><rect x="1531.5" y="904" width="1" height="22" fill="#d4d4d4"/><rect x="1586" y="904" width="1" height="22" fill="#d4d4d4"/></svg>
<div class="t" style="left:738px;top:905px;font-size:26px;color:#5f5f5f;font-weight:normal">B</div>
<svg style="left:0;top:0" width="1681" height="946"><g fill="none" stroke="#5f5f5f" stroke-width="2"><path d="M790 907.5h11M785.5 926.5h11M796 907.5l-5 19"/><path d="M830 906.5v11a7.5 7.5 0 0 0 15 0v-11M828.5 926.5h18"/><path d="M890.5 910c-1-2-3-3-6.5-3-4 0-6.5 2-6.5 5 0 6.5 14 4.5 14 10.5 0 3-3 5-7 5-3.5 0-6-1.2-7.5-3.5M872 917h20.5"/></g></svg>
<div class="t" style="left:915px;top:905px;font-size:26px;color:#5f5f5f;">X</div>
<div class="t" style="left:931px;top:919px;font-size:10px;color:#5f5f5f;font-weight:bold">2</div>
<div class="t" style="left:959px;top:905px;font-size:26px;color:#5f5f5f;">X</div>
<div class="t" style="left:977px;top:903px;font-size:10px;color:#5f5f5f;font-weight:bold">2</div>
<div class="t" style="left:1019px;top:902px;font-size:24px;color:#5f5f5f;font-weight:bold">A</div>
<div class="a" style="left:1078.5px;top:905.5px;width:21.5px;height:20.5px;background:#5f5f5f"></div>
<div class="t" style="left:1081px;top:907px;font-size:19px;color:#fff;font-weight:bold">A</div>
<svg style="left:0;top:0" width="1681" height="946"><g stroke="#5f5f5f" stroke-width="2.2" fill="none"><path d="M1150.5 907h20M1150.5 912.5h13M1150.5 918h20M1150.5 923.5h13"/><path d="M1218.5 908h16M1218.5 916h16M1218.5 924h16"/></g><text x="1212" y="911" font-size="7" font-family="Liberation Sans" fill="#5f5f5f">1</text><text x="1212" y="919" font-size="7" font-family="Liberation Sans" fill="#5f5f5f">2</text><text x="1212" y="927" font-size="7" font-family="Liberation Sans" fill="#5f5f5f">3</text><g stroke="#5f5f5f" stroke-width="2.2" fill="none"><path d="M1282 908h16.5M1282 916h16.5M1282 924h16.5"/><path d="M1276 908h2.5M1276 916h2.5M1276 924h2.5"/><path d="M1339.5 906.5h21M1347 912h13.5M1347 917.5h13.5M1339.5 923.5h21"/></g><path d="M1345 910v9.5l-5-4.75z" fill="#5f5f5f"/><g stroke="#5f5f5f" stroke-width="2.2" fill="none"><path d="M1409 907.5h16.5M1409 913h16.5M1409 918.5h16.5M1409 924h16.5"/><path d="M1403.5 908v16"/></g><path d="M1400 910l3.5-4 3.5 4zM1400 922l3.5 4 3.5-4z" fill="#5f5f5f"/><rect x="1549" y="907" width="20" height="19.5" fill="none" stroke="#5f5f5f" stroke-width="2"/><path d="M1549 911.5h20" stroke="#5f5f5f" stroke-width="3"/><path d="M1549 916.5h20M1549 921.5h20M1555.5 911v15M1562 911v15" stroke="#5f5f5f" stroke-width="1.4"/></svg>
<div class="t" style="left:1475px;top:903px;font-size:19px;color:#6f6f6f;">签名</div>
<div class="t" style="left:1603px;top:903px;font-size:19px;color:#6f6f6f;">更多</div>
</body></html>
